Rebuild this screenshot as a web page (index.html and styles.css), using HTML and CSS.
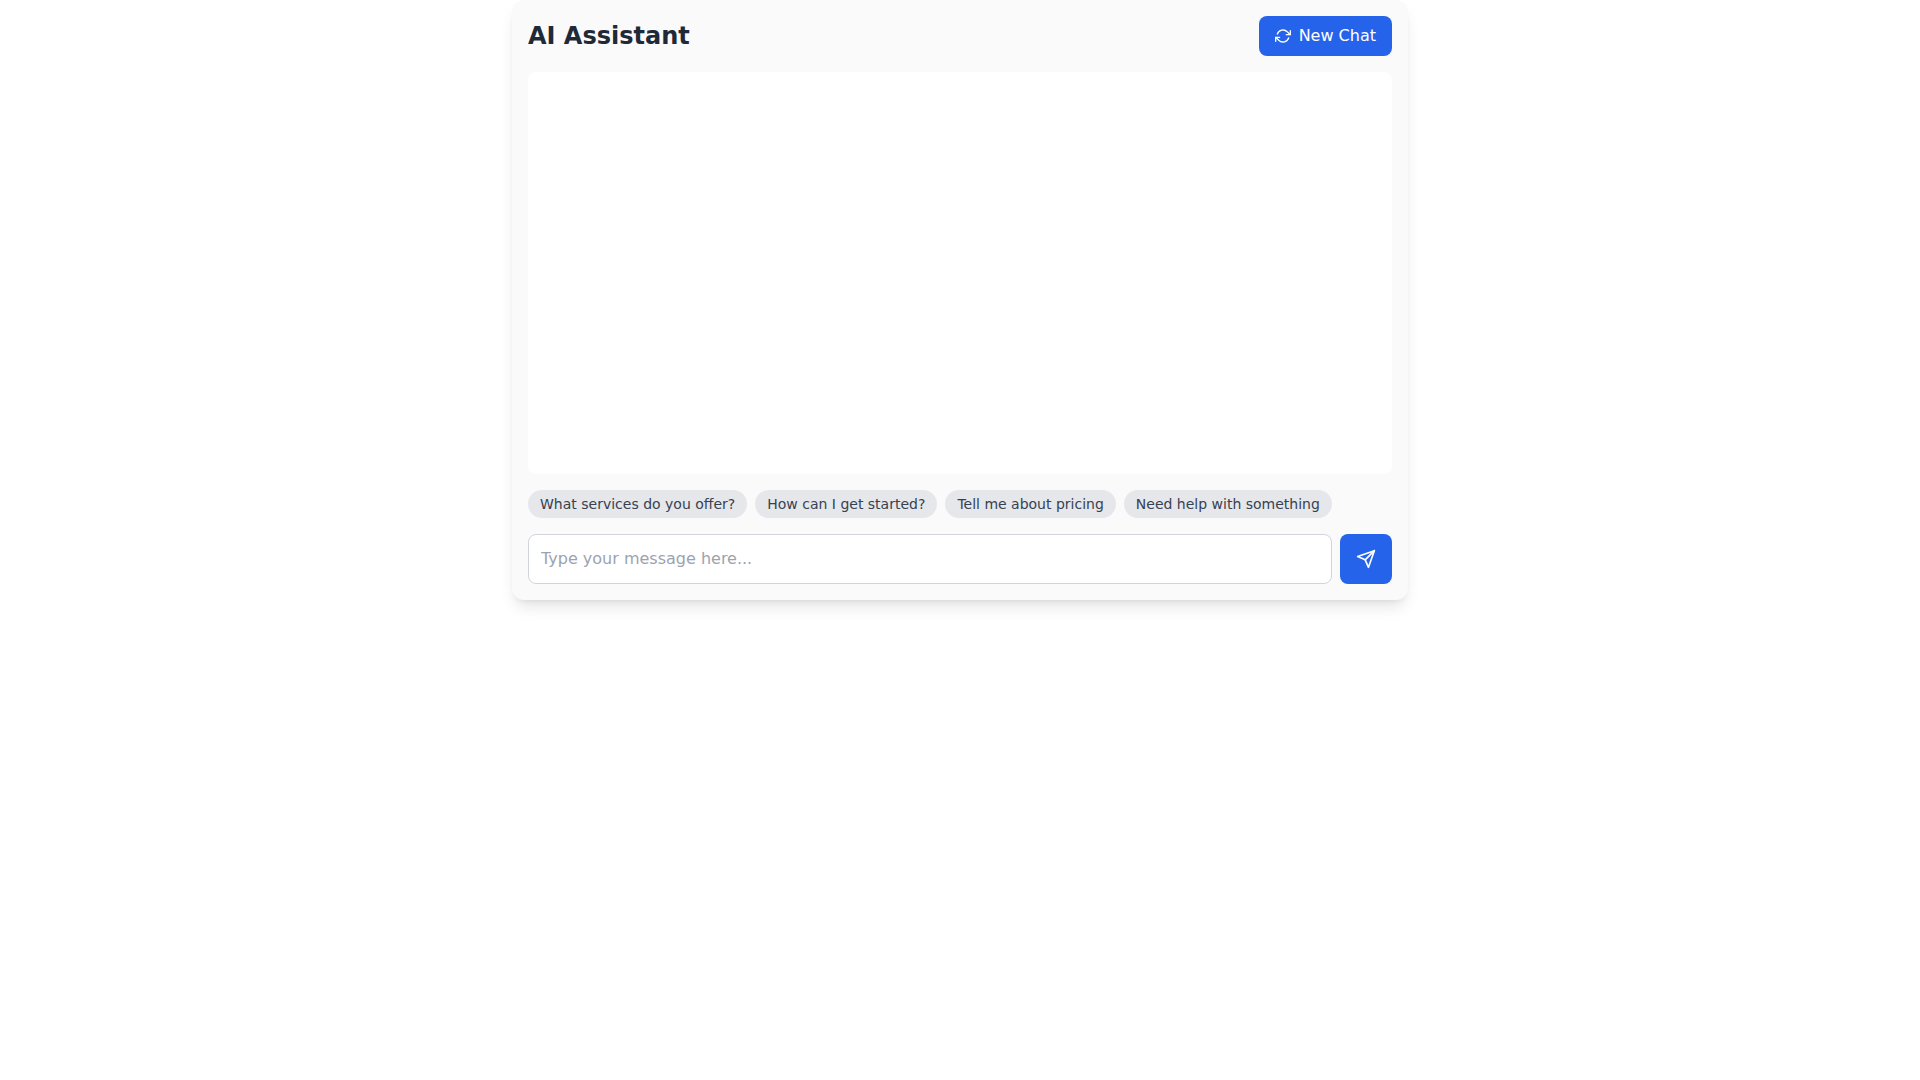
FILE: index.html
```
<!doctype html>
<html lang="en">
    <head>
        <meta charset="UTF-8" />
        <meta name="viewport" content="width=device-width, initial-scale=1.0" />
        <title>AI Assistant</title>
        <link rel="stylesheet" href="styles.css">
    </head>
    <body>
        <main class="chat">
            <header class="chat-header">
                <h1>AI Assistant</h1>
                <button type="button" class="btn new-chat">
                    <svg
                        class="icon"
                        viewBox="0 0 24 24"
                        fill="none"
                        stroke="currentColor"
                        stroke-width="2"
                        stroke-linecap="round"
                        stroke-linejoin="round"
                        aria-hidden="true"
                    >
                        <polyline points="23 4 23 10 17 10"></polyline>
                        <polyline points="1 20 1 14 7 14"></polyline>
                        <path d="M3.51 9a9 9 0 0 1 14.85-3.36L23 10M1 14l4.64 4.36A9 9 0 0 0 20.49 15"></path>
                    </svg>
                    New Chat
                </button>
            </header>

            <div class="messages" role="log" aria-label="Messages"></div>

            <div class="suggestions">
                <button type="button" class="chip">What services do you offer?</button>
                <button type="button" class="chip">How can I get started?</button>
                <button type="button" class="chip">Tell me about pricing</button>
                <button type="button" class="chip">Need help with something</button>
            </div>

            <form class="composer">
                <input
                    type="text"
                    class="message-input"
                    placeholder="Type your message here..."
                    aria-label="Message"
                />
                <button type="submit" class="btn send" aria-label="Send message">
                    <svg
                        class="icon icon-lg"
                        viewBox="0 0 24 24"
                        fill="none"
                        stroke="currentColor"
                        stroke-width="2"
                        stroke-linecap="round"
                        stroke-linejoin="round"
                        aria-hidden="true"
                    >
                        <line x1="22" y1="2" x2="11" y2="13"></line>
                        <polygon points="22 2 15 22 11 13 2 9 22 2"></polygon>
                    </svg>
                </button>
            </form>
        </main>
    </body>
</html>
```

FILE: styles.css
```
:root {
    --primary: #2563eb;
    --primary-hover: #1d4ed8;
    --card-bg: #fafafa;
    --heading: #1f2937;
    --chip-bg: #e5e7eb;
    --chip-text: #374151;
    --border: #d1d5db;
    --placeholder: #9ca3af;
}

* {
    box-sizing: border-box;
    margin: 0;
}

body {
    min-height: 100vh;
    font-family: "DejaVu Sans", sans-serif;
    font-size: 16px;
    line-height: 24px;
    background: white;
    color: var(--heading);
}

button,
input {
    font: inherit;
}

button {
    border: none;
    cursor: pointer;
}

.chat {
    display: flex;
    flex-direction: column;
    gap: 16px;
    max-width: 896px;
    min-height: 600px;
    margin: 0 auto;
    padding: 16px;
    background: var(--card-bg);
    border-radius: 12px;
    box-shadow:
        0 10px 15px -3px rgba(0, 0, 0, 0.1),
        0 4px 6px -4px rgba(0, 0, 0, 0.1);
}

.chat-header {
    display: flex;
    align-items: center;
    justify-content: space-between;
}

h1 {
    font-size: 24px;
    line-height: 32px;
    font-weight: bold;
}

.btn {
    display: flex;
    align-items: center;
    gap: 8px;
    padding: 8px 16px;
    background: var(--primary);
    color: white;
    border-radius: 8px;
}

.btn:hover {
    background: var(--primary-hover);
}

.icon {
    width: 16px;
    height: 16px;
}

.icon-lg {
    width: 20px;
    height: 20px;
}

.messages {
    flex: 1;
    overflow-y: auto;
    background: white;
    border-radius: 8px;
}

.suggestions {
    display: flex;
    flex-wrap: wrap;
    gap: 8px;
}

.chip {
    padding: 4px 12px;
    font-size: 14px;
    line-height: 20px;
    background: var(--chip-bg);
    color: var(--chip-text);
    border-radius: 14px;
}

.composer {
    display: flex;
    gap: 8px;
}

.message-input {
    flex: 1;
    min-width: 0;
    padding: 12px;
    line-height: 24px;
    background: white;
    color: var(--heading);
    border: 1px solid var(--border);
    border-radius: 8px;
}

.message-input::placeholder {
    color: var(--placeholder);
}
```
